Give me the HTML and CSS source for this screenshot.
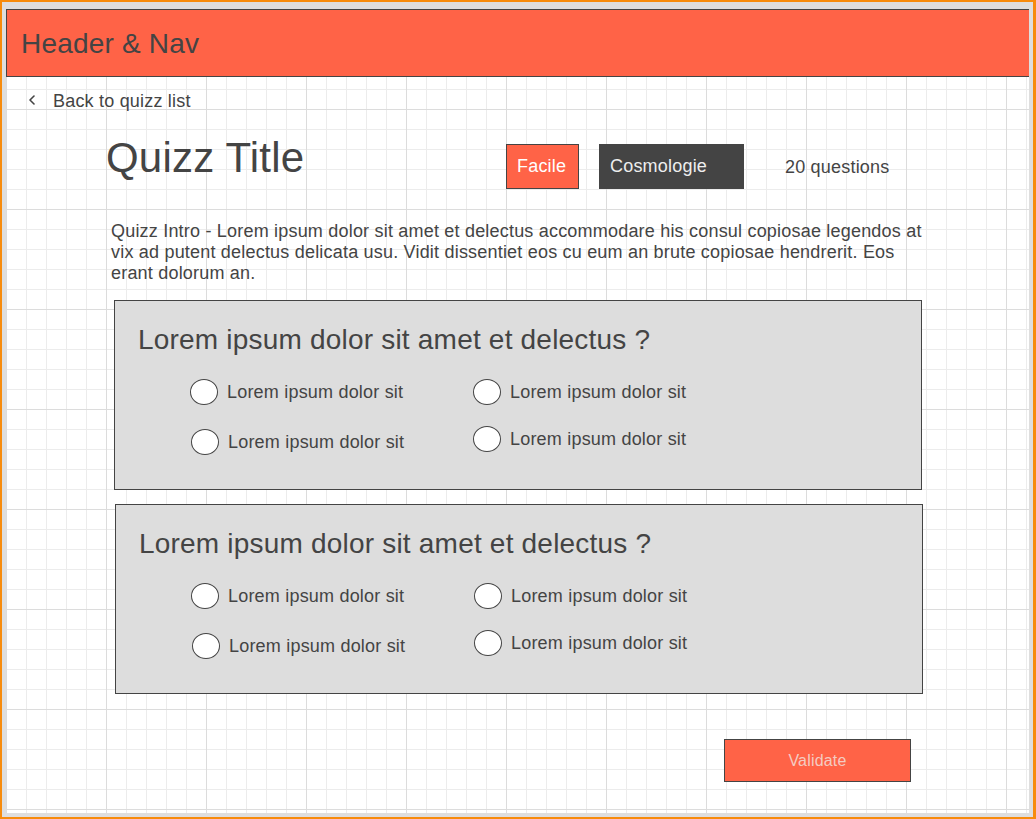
FILE: index.html
```html
<!DOCTYPE html>
<html lang="en">
<head>
<meta charset="utf-8">
<title>Quizz</title>
<link rel="stylesheet" href="styles.css">
</head>
<body>
<div class="frame">
  <div class="canvas">
    <header class="header">Header &amp; Nav</header>

    <a class="back" href="#">
      <svg class="back-icon" width="8" height="12" viewBox="0 0 8 12" aria-hidden="true">
        <path d="M6 1 L2 5 L6 9" fill="none" stroke="#444" stroke-width="1.6" stroke-linecap="round" stroke-linejoin="round"/>
      </svg>
      <span>Back to quizz list</span>
    </a>

    <div class="title-row">
      <h1 class="title">Quizz Title</h1>
      <div class="meta">
        <span class="tag tag-level">Facile</span>
        <span class="tag tag-topic">Cosmologie</span>
        <span class="count">20 questions</span>
      </div>
    </div>

    <p class="intro">Quizz Intro - Lorem ipsum dolor sit amet et delectus accommodare his consul copiosae legendos at vix ad putent delectus delicata usu. Vidit dissentiet eos cu eum an brute copiosae hendrerit. Eos erant dolorum an.</p>

    <section class="question">
      <h2 class="q-title">Lorem ipsum dolor sit amet et delectus ?</h2>
      <div class="options">
        <label class="option"><span class="radio"></span><span>Lorem ipsum dolor sit</span></label>
        <label class="option"><span class="radio"></span><span>Lorem ipsum dolor sit</span></label>
        <label class="option option-shift"><span class="radio"></span><span>Lorem ipsum dolor sit</span></label>
        <label class="option option-up"><span class="radio"></span><span>Lorem ipsum dolor sit</span></label>
      </div>
    </section>

    <section class="question question-second">
      <h2 class="q-title">Lorem ipsum dolor sit amet et delectus ?</h2>
      <div class="options">
        <label class="option"><span class="radio"></span><span>Lorem ipsum dolor sit</span></label>
        <label class="option"><span class="radio"></span><span>Lorem ipsum dolor sit</span></label>
        <label class="option option-shift"><span class="radio"></span><span>Lorem ipsum dolor sit</span></label>
        <label class="option option-up"><span class="radio"></span><span>Lorem ipsum dolor sit</span></label>
      </div>
    </section>

    <button class="validate" type="button">Validate</button>
  </div>
</div>
</body>
</html>
```

FILE: styles.css
```css
* {
  box-sizing: border-box;
}

html, body {
  margin: 0;
  padding: 0;
}

body {
  background: #f78b0c;
  width: 1036px;
  height: 819px;
  overflow: hidden;
  font-family: "Liberation Sans", Arial, sans-serif;
  letter-spacing: 0.2px;
  color: #444;
}

.frame {
  margin: 2px 3px 2px 2px;
  height: 815px;
  background: #dedede;
  padding: 7px 4px 4px 4px;
}

.canvas {
  width: 1023px;
  height: 804px;
  background-color: #fff;
  background-image:
    linear-gradient(to right, #dcdcdc 1px, transparent 1px),
    linear-gradient(to bottom, #dcdcdc 1px, transparent 1px),
    linear-gradient(to right, #ececec 1px, transparent 1px),
    linear-gradient(to bottom, #ececec 1px, transparent 1px);
  background-size: 100px 100px, 100px 100px, 20px 20px, 20px 20px;
  display: flex;
  flex-direction: column;
  align-items: flex-start;
  overflow: hidden;
}

.header {
  width: 1024px;
  height: 68px;
  flex: none;
  background: #ff6347;
  border: 1px solid #444;
  display: flex;
  align-items: center;
  padding: 2px 0 0 14px;
  font-size: 28px;
  color: #444;
}

.back {
  margin: 14px 0 0 22px;
  display: flex;
  align-items: center;
  gap: 17px;
  font-size: 18px;
  line-height: 21px;
  color: #444;
  text-decoration: none;
}

.back-icon {
  display: block;
  flex: none;
  margin-top: -2px;
}

.title-row {
  margin: 24px 0 0 100px;
  display: flex;
  align-items: flex-start;
}

.title {
  margin: 0;
  width: 400px;
  font-size: 42px;
  line-height: 44px;
  font-weight: normal;
  color: #444;
}

.meta {
  margin-top: 8px;
  display: flex;
  align-items: center;
  height: 45px;
}

.tag {
  height: 45px;
  display: flex;
  align-items: center;
  padding-left: 10px;
  font-size: 18px;
}

.tag-level {
  width: 73px;
  background: #ff6347;
  border: 1px solid #444;
  color: #fff;
}

.tag-topic {
  width: 145px;
  margin-left: 20px;
  background: #444;
  color: #eee;
  padding-left: 11px;
}

.count {
  margin-left: 41px;
  padding-top: 2px;
  font-size: 18px;
  color: #444;
}

.intro {
  margin: 32px 0 0 105px;
  width: 816px;
  font-size: 18px;
  line-height: 21px;
  color: #444;
}

.question {
  margin: 16px 0 0 108px;
  width: 808px;
  height: 190px;
  flex: none;
  background: #dddddd;
  border: 1px solid #444;
  padding: 23px 0 0 23px;
}

.question-second {
  margin: 14px 0 0 109px;
}

.q-title {
  margin: 0;
  font-size: 28px;
  line-height: 32px;
  font-weight: normal;
  color: #444;
}

.options {
  margin: 23px 0 0 52px;
  display: grid;
  grid-template-columns: 283px auto;
  row-gap: 24px;
}

.option {
  display: flex;
  align-items: center;
  gap: 9px;
  font-size: 18px;
  line-height: 21px;
  height: 26px;
  color: #444;
}

.option-shift {
  margin-left: 1px;
}

.option-up {
  margin-top: -3px;
}

.radio {
  width: 28px;
  height: 26px;
  flex: none;
  border-radius: 50%;
  background: #fff;
  border: 1px solid #444;
}

.validate {
  margin: 45px 0 0 718px;
  width: 187px;
  height: 43px;
  flex: none;
  background: #ff6347;
  border: 1px solid #444;
  border-radius: 0;
  font-family: "Liberation Sans", Arial, sans-serif;
  letter-spacing: 0.2px;
  font-size: 16px;
  color: #f4cbc2;
  padding: 0;
}
```
